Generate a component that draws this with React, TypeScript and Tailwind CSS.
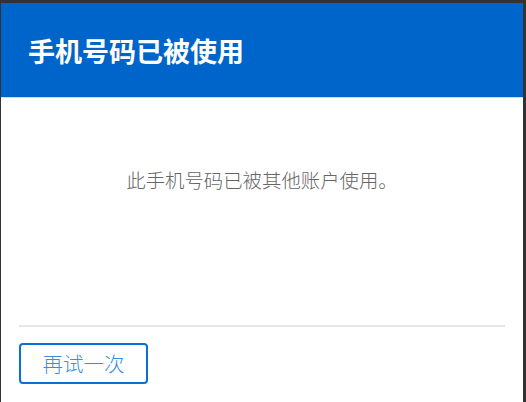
export default function App() {
  return (
    <div className="w-[526px] h-[402px] bg-[#333333] pt-[3px] pl-px pr-[3px] overflow-hidden">
      <div
        className="h-full bg-white flex flex-col"
        style={{ fontFamily: '"Noto Sans CJK SC", "Noto Sans", sans-serif' }}
      >
        {/* Header */}
        <div className="h-[95px] shrink-0 bg-[#0065ca] border-b border-[#c8dcf2] flex items-center pl-[27px]">
          <h1 className="text-[27px] font-bold text-white leading-none">手机号码已被使用</h1>
        </div>

        {/* Body */}
        <div className="h-[227px] shrink-0 pt-[70px] text-center">
          <p className="text-[19.4px] font-light text-[#666666] leading-[24px]">此手机号码已被其他账户使用。</p>
        </div>

        {/* Footer */}
        <div className="mx-[18px] border-t-2 border-[#e6e6e6] pt-4">
          <button className="w-[129px] h-[41px] border-2 border-[#0a6fd6] rounded-[4px] text-[20.5px] font-light text-[#3a8ee0] leading-none">
            再试一次
          </button>
        </div>
      </div>
    </div>
  );
}
